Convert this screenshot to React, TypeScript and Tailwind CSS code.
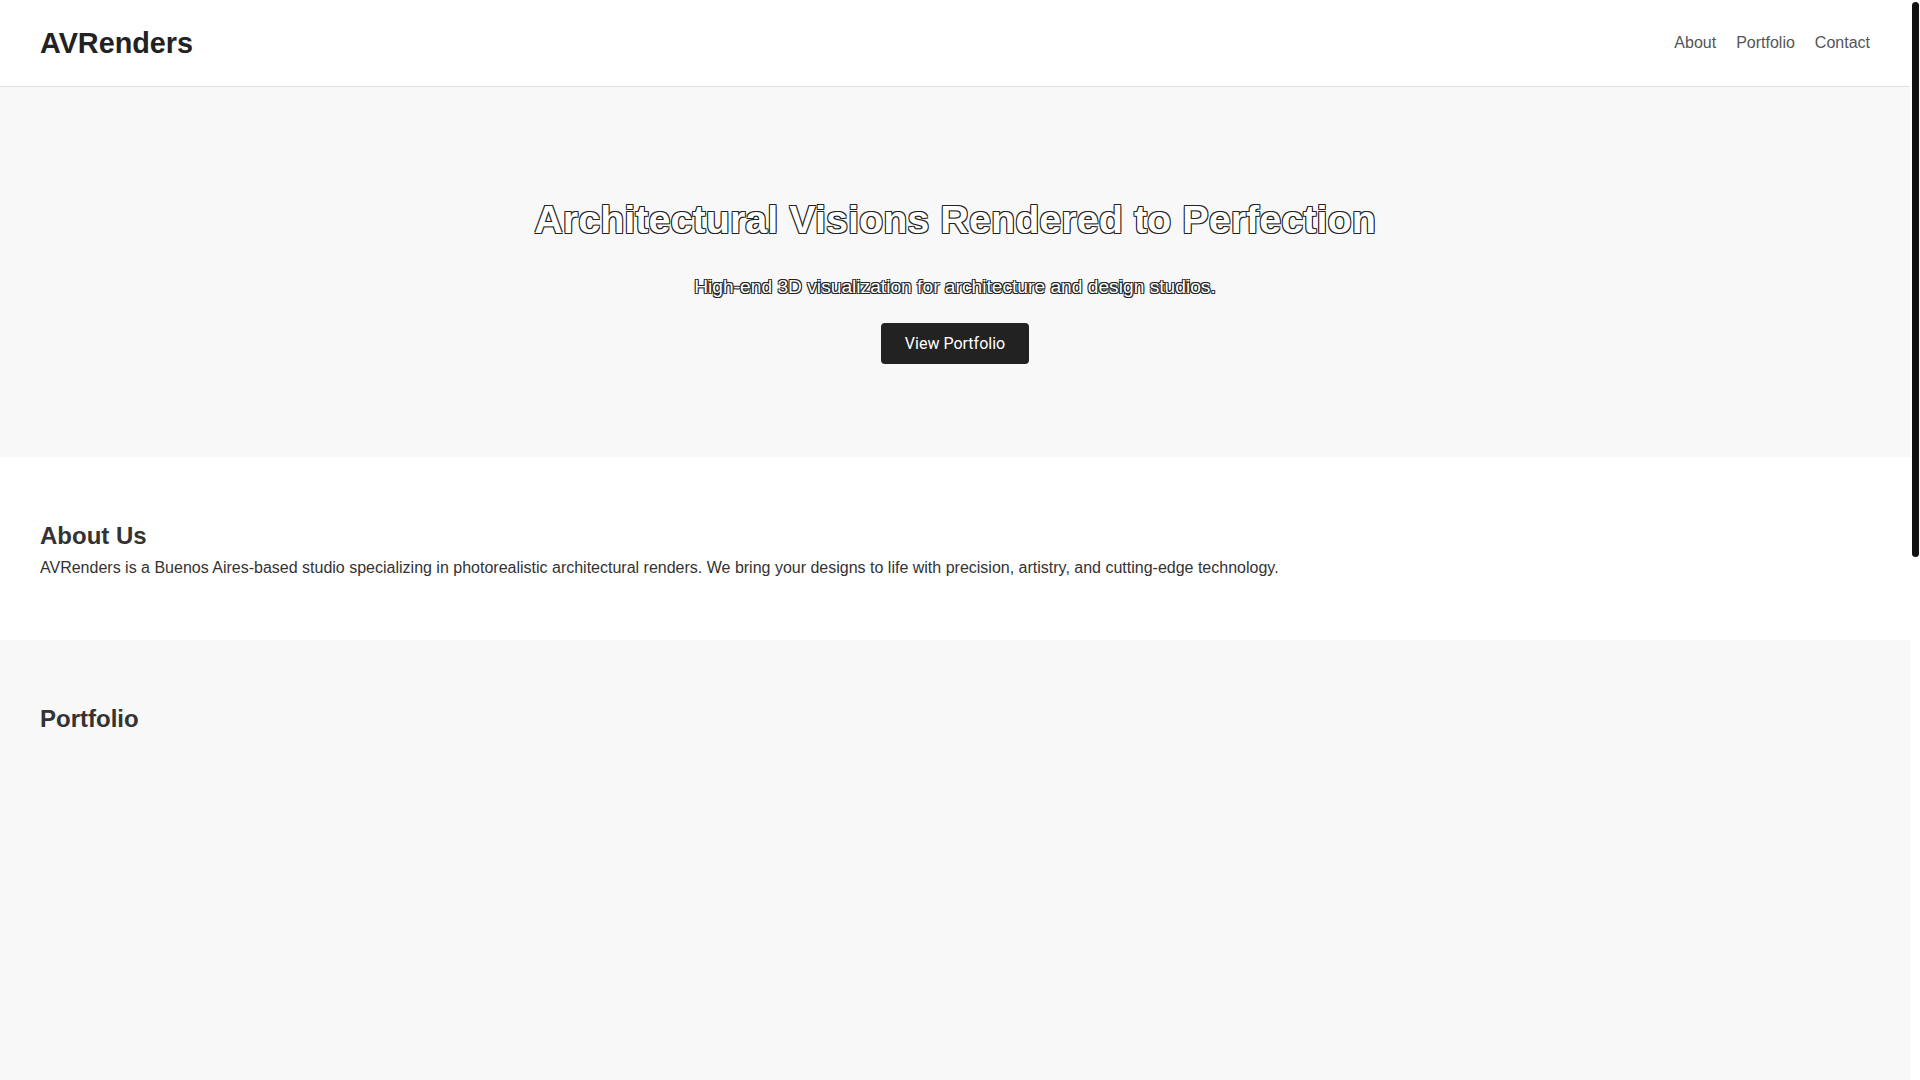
import React from "react";

const outline =
  "[text-shadow:-1px_-1px_0_#222,1px_-1px_0_#222,-1px_1px_0_#222,1px_1px_0_#222]";

function Header() {
  return (
    <header className="flex h-[87px] shrink-0 items-center justify-between border-b border-[#e0e0e0] bg-white px-10">
      <div className="text-[28.8px] font-bold text-[#222]">AVRenders</div>
      <nav className="flex gap-5 text-[16px] text-[#555]">
        <a href="#about">About</a>
        <a href="#portfolio">Portfolio</a>
        <a href="#contact">Contact</a>
      </nav>
    </header>
  );
}

function Hero() {
  return (
    <section className="flex shrink-0 flex-col items-center bg-[#f8f8f8] pt-[109.5px] pb-[92.3px] text-center">
      <h1 className={`text-[39.6px] font-bold text-white ${outline}`}>
        Architectural Visions Rendered to Perfection
      </h1>
      <p className={`mt-[34.4px] text-[19.2px] text-white ${outline}`}>
        High-end 3D visualization for architecture and design studios.
      </p>
      <a
        href="#portfolio"
        className="mt-[25px] rounded-[4px] bg-[#222] px-6 py-[11.2px] font-['Roboto',sans-serif] text-[16px] text-white"
      >
        View Portfolio
      </a>
    </section>
  );
}

function About() {
  return (
    <section id="about" className="shrink-0 bg-white px-10 pt-[65px] pb-[62.5px]">
      <h2 className="text-[24px] font-bold text-[#333]">About Us</h2>
      <p className="mt-[9.5px] text-[16px] text-[#333]">
        AVRenders is a Buenos Aires-based studio specializing in photorealistic architectural renders. We bring
        your designs to life with precision, artistry, and cutting-edge technology.
      </p>
    </section>
  );
}

function Portfolio() {
  return (
    <section id="portfolio" className="flex-1 bg-[#f8f8f8] px-10 pt-[65.5px]">
      <h2 className="text-[24px] font-bold text-[#333]">Portfolio</h2>
      <div className="mt-6 grid grid-cols-3 gap-5" />
    </section>
  );
}

// Page scroll indicator on the right edge
function ScrollTrack() {
  return (
    <aside className="w-[10px] shrink-0 bg-white pt-[2px] pl-[2px]">
      <div className="h-[555px] w-[6.5px] rounded-full bg-[#111]" />
    </aside>
  );
}

export default function App() {
  return (
    <div className="flex h-screen overflow-hidden bg-white font-['Liberation_Sans',Arial,sans-serif] leading-[normal]">
      <main className="flex min-w-0 flex-1 flex-col overflow-hidden">
        <Header />
        <Hero />
        <About />
        <Portfolio />
      </main>
      <ScrollTrack />
    </div>
  );
}
